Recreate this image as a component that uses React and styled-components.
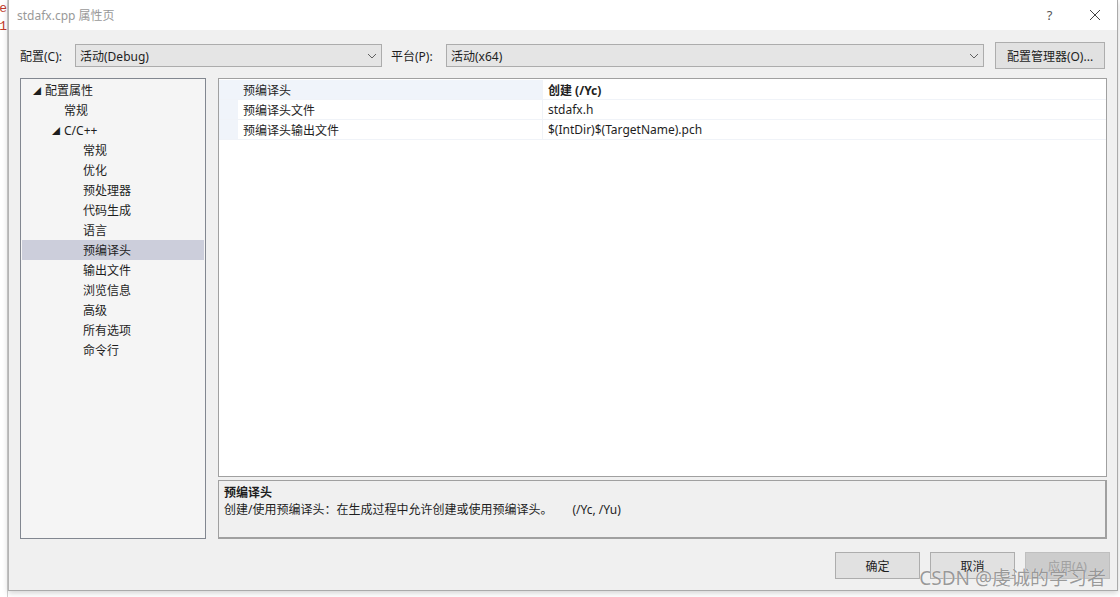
import React from "react";
import styled, { createGlobalStyle } from "styled-components";

const GlobalStyle = createGlobalStyle`
    html, body {
        margin: 0;
        padding: 0;
        background: #ffffff;
        font-family: "Noto Sans", "Noto Sans CJK SC", sans-serif;
        font-size: 12px;
        color: #1e1e1e;
    }
`;

const FONT = `"Noto Sans", "Noto Sans CJK SC", sans-serif`;

const treeItems = [
    { label: "配置属性", level: 0, arrow: true },
    { label: "常规", level: 1 },
    { label: "C/C++", level: 1, arrow: true },
    { label: "常规", level: 2 },
    { label: "优化", level: 2 },
    { label: "预处理器", level: 2 },
    { label: "代码生成", level: 2 },
    { label: "语言", level: 2 },
    { label: "预编译头", level: 2, selected: true },
    { label: "输出文件", level: 2 },
    { label: "浏览信息", level: 2 },
    { label: "高级", level: 2 },
    { label: "所有选项", level: 2 },
    { label: "命令行", level: 2 },
];

const rows = [
    { name: "预编译头", value: "创建 (/Yc)", bold: true, active: true },
    { name: "预编译头文件", value: "stdafx.h" },
    { name: "预编译头输出文件", value: "$(IntDir)$(TargetName).pch" },
];

const Chevron = () => (
    <svg width="10" height="6" viewBox="0 0 10 6">
        <path d="M1 1 L5 5 L9 1" fill="none" stroke="#606060" strokeWidth="1" />
    </svg>
);

const App = () => {
    return (
        <Screen>
            <GlobalStyle />
            <EditorStrip>
                <span>e(</span>
                <span>x1</span>
            </EditorStrip>
            <Window>
                <TitleBar>
                    <Title>stdafx.cpp 属性页</Title>
                    <TitleButton>?</TitleButton>
                    <TitleButton>
                        <svg width="12" height="12" viewBox="0 0 12 12">
                            <path d="M1 1 L11 11 M11 1 L1 11" stroke="#444" strokeWidth="1" />
                        </svg>
                    </TitleButton>
                </TitleBar>
                <Body>
                    <ConfigRow>
                        <Label>配置(C):</Label>
                        <Select width="307px">
                            <span>活动(Debug)</span>
                            <Chevron />
                        </Select>
                        <Label style={{ marginLeft: 9 }}>平台(P):</Label>
                        <Select grow>
                            <span>活动(x64)</span>
                            <Chevron />
                        </Select>
                        <Button width="110px" height="27px">配置管理器(O)...</Button>
                    </ConfigRow>
                    <Main>
                        <Tree>
                            {treeItems.map((item, i) => (
                                <TreeItem key={i} selected={item.selected}>
                                    <Indent level={item.level}>
                                        {item.arrow ? <Arrow>◢</Arrow> : <ArrowSpace />}
                                    </Indent>
                                    {item.label}
                                </TreeItem>
                            ))}
                        </Tree>
                        <RightCol>
                            <Grid>
                                {rows.map((r, i) => (
                                    <GridRow key={i}>
                                        <Gutter />
                                        <NameCell active={r.active}>{r.name}</NameCell>
                                        <ValueCell bold={r.bold}>{r.value}</ValueCell>
                                    </GridRow>
                                ))}
                            </Grid>
                            <Desc>
                                <DescTitle>预编译头</DescTitle>
                                <DescText>
                                    创建/使用预编译头：在生成过程中允许创建或使用预编译头。
                                    <Switches>(/Yc, /Yu)</Switches>
                                </DescText>
                            </Desc>
                        </RightCol>
                    </Main>
                    <Footer>
                        <Button width="85px" height="27px">确定</Button>
                        <Button width="85px" height="27px">取消</Button>
                        <Button width="85px" height="27px" disabled>应用(A)</Button>
                        <Watermark>CSDN @虔诚的学习者</Watermark>
                    </Footer>
                </Body>
            </Window>
        </Screen>
    );
};

const Screen = styled.div`
    position: relative;
    display: flex;
    width: 1120px;
    height: 597px;
    overflow: hidden;
    background: #ffffff;
`;

const EditorStrip = styled.div`
    width: 7px;
    overflow: hidden;
    display: flex;
    flex-direction: column;
    font-family: "Liberation Mono", monospace;
    font-size: 13px;
    line-height: 18px;
    color: #c0392b;
    white-space: nowrap;
    direction: rtl;
    border-right: 1px solid #d0d0d0;

    span {
        display: block;
    }
`;

const Window = styled.div`
    width: 1108px;
    height: 590px;
    display: flex;
    flex-direction: column;
    border: 1px solid #aaaaaa;
    border-top: none;
    border-left-color: #b4b4b4;
    box-shadow: 0 2px 6px rgba(0, 0, 0, 0.18);
    background: #f0f0f0;
`;

const TitleBar = styled.div`
    height: 30px;
    background: #ffffff;
    display: flex;
    align-items: center;
    padding-left: 8px;
`;

const Title = styled.div`
    flex: 1;
    font-family: ${FONT};
    font-size: 12px;
    color: #999999;
`;

const TitleButton = styled.div`
    width: 45px;
    height: 30px;
    display: flex;
    align-items: center;
    justify-content: center;
    font-family: ${FONT};
    font-size: 13px;
    color: #555;
`;

const Body = styled.div`
    flex: 1;
    display: flex;
    flex-direction: column;
    padding: 12px 0 0 11px;
`;

const ConfigRow = styled.div`
    display: flex;
    align-items: center;
    height: 27px;
    padding-right: 12px;
`;

const Label = styled.div`
    width: 55px;
    font-family: ${FONT};
    font-size: 12px;
    color: #1e1e1e;
`;

const Select = styled.div`
    height: 23px;
    ${(p) => (p.grow ? "flex: 1;" : `width: ${p.width};`)}
    box-sizing: border-box;
    border: 1px solid #acacac;
    background: #e5e5e5;
    display: flex;
    align-items: center;
    justify-content: space-between;
    padding: 0 4px 0 4px;
    margin-right: ${(p) => (p.grow ? "11px" : "0")};
    font-family: ${FONT};
    font-size: 12px;
    color: #1e1e1e;
`;

const Button = styled.div`
    width: ${(p) => p.width};
    height: ${(p) => p.height};
    box-sizing: border-box;
    border: 1px solid ${(p) => (p.disabled ? "#bfbfbf" : "#adadad")};
    background: ${(p) => (p.disabled ? "#cccccc" : "#e1e1e1")};
    color: ${(p) => (p.disabled ? "#a0a0a0" : "#1e1e1e")};
    display: flex;
    align-items: center;
    justify-content: center;
    font-family: ${FONT};
    font-size: 12px;
`;

const Main = styled.div`
    display: flex;
    height: 461px;
    margin-top: 9px;
    gap: 12px;
    padding-right: 10px;
`;

const Tree = styled.div`
    width: 186px;
    box-sizing: border-box;
    border: 1px solid #828790;
    background: #f5f5f5;
    padding: 1px 1px;
`;

const TreeItem = styled.div`
    height: 20px;
    display: flex;
    align-items: center;
    font-family: ${FONT};
    font-size: 12px;
    color: #1e1e1e;
    background: ${(p) => (p.selected ? "#cccedb" : "transparent")};
`;

const Indent = styled.div`
    width: ${(p) => 23 + p.level * 19}px;
    display: flex;
    justify-content: flex-end;
    flex-shrink: 0;
`;

const Arrow = styled.span`
    width: 13px;
    font-size: 8px;
    color: #1e1e1e;
    margin-right: -1px;
`;

const ArrowSpace = styled.span`
    width: 0;
`;

const RightCol = styled.div`
    flex: 1;
    display: flex;
    flex-direction: column;
    gap: 3px;
`;

const Grid = styled.div`
    height: 399px;
    box-sizing: border-box;
    border: 1px solid #a0a0a0;
    background: #ffffff;
    padding-top: 1px;
`;

const GridRow = styled.div`
    display: flex;
    height: 19px;
    border-bottom: 1px solid #f0f3f8;
`;

const Gutter = styled.div`
    width: 19px;
    background: #f0f4fa;
    flex-shrink: 0;
`;

const NameCell = styled.div`
    width: 304px;
    flex-shrink: 0;
    display: flex;
    align-items: center;
    padding-left: 5px;
    box-sizing: border-box;
    background: ${(p) => (p.active ? "#f0f4fa" : "#ffffff")};
    font-family: ${FONT};
    font-size: 12px;
    color: #1e1e1e;
`;

const ValueCell = styled.div`
    flex: 1;
    display: flex;
    align-items: center;
    padding-left: 5px;
    border-left: 1px solid #f0f3f8;
    font-family: ${FONT};
    font-size: 12px;
    font-weight: ${(p) => (p.bold ? 700 : 400)};
    color: #1e1e1e;
`;

const Desc = styled.div`
    flex: 1;
    box-sizing: border-box;
    border: 1px solid #a0a0a0;
    border-bottom-width: 2px;
    border-right-width: 2px;
    background: #f0f0f0;
    padding: 3px 5px;
`;

const DescTitle = styled.div`
    font-family: ${FONT};
    font-size: 12px;
    font-weight: 700;
    color: #1e1e1e;
    line-height: 17px;
`;

const DescText = styled.div`
    font-family: ${FONT};
    font-size: 12px;
    color: #1e1e1e;
    line-height: 18px;
`;

const Switches = styled.span`
    margin-left: 20px;
`;

const Footer = styled.div`
    position: relative;
    display: flex;
    justify-content: flex-end;
    gap: 10px;
    margin-top: 13px;
    padding-right: 7px;
`;

const Watermark = styled.div`
    position: absolute;
    right: 11px;
    top: 11px;
    font-family: ${FONT};
    font-size: 19px;
    color: rgba(120, 120, 120, 0.75);
    text-shadow: 0 0 1px #ffffff;
    pointer-events: none;
`;

export default App;
